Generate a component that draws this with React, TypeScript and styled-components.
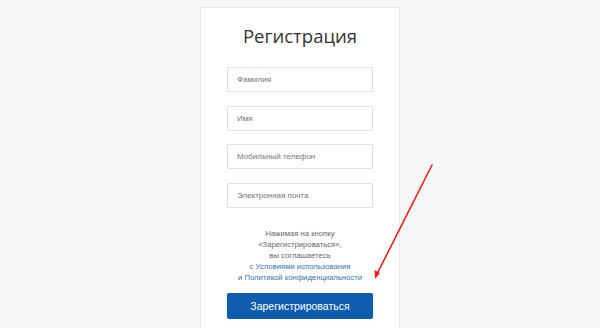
import React from 'react';
import styled, { createGlobalStyle } from 'styled-components';

const GlobalStyle = createGlobalStyle`
  html, body {
    margin: 0;
    padding: 0;
    background: #f5f6f6;
  }
  body {
    width: 600px;
    height: 328px;
    overflow: hidden;
    font-family: "Liberation Sans", Arial, sans-serif;
  }
`;

const Page = styled.div`
  position: relative;
  width: 600px;
  height: 328px;
  display: flex;
  justify-content: center;
  padding-top: 7px;
  box-sizing: border-box;
  overflow: hidden;
`;

const Card = styled.div`
  width: 200px;
  height: 340px;
  background: #fff;
  border: 1px solid #e6e8e8;
  box-sizing: border-box;
  padding: 0 26px;
  display: flex;
  flex-direction: column;
  align-items: stretch;
`;

const Title = styled.h1`
  margin: 16px 0 20px;
  font-family: "Open Sans", sans-serif;
  font-weight: 400;
  font-size: 18.5px;
  line-height: 23px;
  color: #333;
  text-align: center;
`;

const Fields = styled.div`
  display: flex;
  flex-direction: column;
  gap: 13.5px;
`;

const Field = styled.input`
  height: 25px;
  box-sizing: border-box;
  border: 1px solid #dfe1e1;
  border-radius: 1px;
  padding: 0 9px;
  font-family: "Liberation Sans", Arial, sans-serif;
  font-size: 8px;
  color: #333;
  outline: none;
  &::placeholder {
    color: #757575;
  }
`;

const Terms = styled.p`
  margin: 20px 0 0;
  font-size: 7.7px;
  line-height: 11px;
  color: #666;
  text-align: center;
`;

const TermsLink = styled.a`
  color: #3673b0;
  text-decoration: none;
`;

const Submit = styled.button`
  margin-top: 10px;
  height: 26px;
  border: none;
  border-radius: 2px;
  background: #0d5cad;
  color: #fff;
  font-family: "Liberation Sans", Arial, sans-serif;
  font-size: 10.5px;
  cursor: pointer;
`;

const Arrow = styled.svg`
  position: absolute;
  left: 0;
  top: 0;
  pointer-events: none;
`;

export default function App() {
  return (
    <>
      <GlobalStyle />
      <Page>
        <Card>
          <Title>Регистрация</Title>
          <Fields>
            <Field placeholder="Фамилия" />
            <Field placeholder="Имя" />
            <Field placeholder="Мобильный телефон" />
            <Field placeholder="Электронная почта" />
          </Fields>
          <Terms>
            Нажимая на кнопку
            <br />
            «Зарегистрироваться»,
            <br />
            вы соглашаетесь
            <br />
            с <TermsLink href="#">Условиями использования</TermsLink>
            <br />
            и <TermsLink href="#">Политикой конфиденциальности</TermsLink>
          </Terms>
          <Submit>Зарегистрироваться</Submit>
        </Card>
        <Arrow width="600" height="328" viewBox="0 0 600 328">
          <line x1="432" y1="165" x2="377" y2="274" stroke="#e8211d" strokeWidth="1.6" strokeLinecap="round" />
          <polygon points="375,279 374.5,270 380,273" fill="#e8211d" />
        </Arrow>
      </Page>
    </>
  );
}
